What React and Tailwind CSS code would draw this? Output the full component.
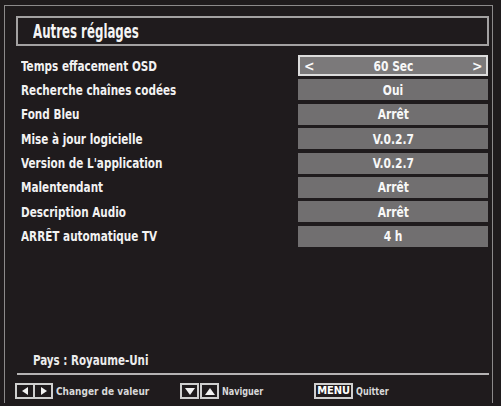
import React from "react";

const rows = [
  ["Temps effacement OSD", "60 Sec", true],
  ["Recherche chaînes codées", "Oui"],
  ["Fond Bleu", "Arrêt"],
  ["Mise à jour logicielle", "V.0.2.7"],
  ["Version de L'application", "V.0.2.7"],
  ["Malentendant", "Arrêt"],
  ["Description Audio", "Arrêt"],
  ["ARRÊT automatique TV", "4 h"],
];

const F = "font-['Liberation_Sans_Narrow','DejaVu_Sans_Condensed','Liberation_Sans',sans-serif]";

function Tri({ dir }) {
  const pts = {
    left: "8,2 2,6 8,10",
    right: "3,2 9,6 3,10",
    down: "2,3 12,3 7,10",
    up: "2,10 12,10 7,3",
  }[dir];
  const v = dir === "up" || dir === "down";
  return (
    <svg width={v ? 14 : 11} height="12" viewBox={v ? "0 0 14 12" : "0 0 11 12"}>
      <polygon points={pts} fill="#f2f2f2" />
    </svg>
  );
}

export default function App() {
  return (
    <div className={`w-[501px] h-[406px] bg-[#1f1b1d] pl-[4px] pt-[5px] pr-[8px] pb-[3px] ${F}`}>
      <div className="h-full border-l border-t border-r border-[#8c8a8b] flex flex-col">
        <div className="ml-[11px] mr-[3px] mt-[10px] h-[30px] border-2 border-[#a3a1a2] flex items-center pl-[15px]">
          <span className="text-[19px] font-bold text-[#f4f4f4] leading-none whitespace-nowrap origin-left scale-x-[0.69]">Autres réglages</span>
        </div>
        <div className="mt-[9px] flex flex-col gap-[3.4px]">
          {rows.map(([label, value, sel]) => (
            <div key={label} className="h-[21px] flex items-center">
              <div className="w-[293px] pl-[16px] flex">
                <span className="text-[14px] font-bold text-[#f2f2f2] leading-none whitespace-nowrap origin-left scale-x-[0.83]">{label}</span>
              </div>
              <div
                className={`w-[190px] h-[21px] flex items-center justify-between px-[4px] text-[14px] font-bold text-[#f8f8f8] leading-none ${
                  sel ? "bg-[#7b797a] border-2 border-[#dcdcdc]" : "bg-[#716f70]"
                }`}
              >
                <span className="w-[10px]">{sel ? "<" : ""}</span>
                <span className="whitespace-nowrap scale-x-[0.85]">{value}</span>
                <span className="w-[10px] text-right">{sel ? ">" : ""}</span>
              </div>
            </div>
          ))}
        </div>
        <div className="flex-1" />
        <div className="pl-[28px] flex">
          <span className="text-[14px] font-bold text-[#ececec] leading-none whitespace-nowrap origin-left scale-x-[0.82]">Pays : Royaume-Uni</span>
        </div>
        <div className="ml-[12px] mr-[3px] mt-[6px] h-[2px] bg-[#b5b3b4]" />
        <div className="mt-[4px] h-[24px] flex items-center pl-[10px] text-[10px] font-bold text-[#d8d8d8]">
          <div className="flex items-center border-2 border-[#cfcfcf] h-[16px]">
            <div className="w-[16px] h-full flex items-center justify-center"><Tri dir="left" /></div>
            <div className="w-[2px] h-full bg-[#cfcfcf]" />
            <div className="w-[16px] h-full flex items-center justify-center"><Tri dir="right" /></div>
          </div>
          <span className="ml-[3px]">Changer de valeur</span>
          <div className="ml-[31px] flex items-center gap-[1px]">
            <div className="w-[19px] h-[16px] border-2 border-[#cfcfcf] flex items-center justify-center"><Tri dir="down" /></div>
            <div className="w-[19px] h-[16px] border-2 border-[#cfcfcf] flex items-center justify-center"><Tri dir="up" /></div>
          </div>
          <span className="ml-[3px] whitespace-nowrap origin-left scale-x-[0.9]">Naviguer</span>
          <div className="ml-[46px] h-[16px] px-[1px] border-2 border-[#cfcfcf] flex items-center text-[11px] text-white">MENU</div>
          <span className="ml-[3px] whitespace-nowrap origin-left scale-x-[0.9]">Quitter</span>
        </div>
      </div>
    </div>
  );
}
